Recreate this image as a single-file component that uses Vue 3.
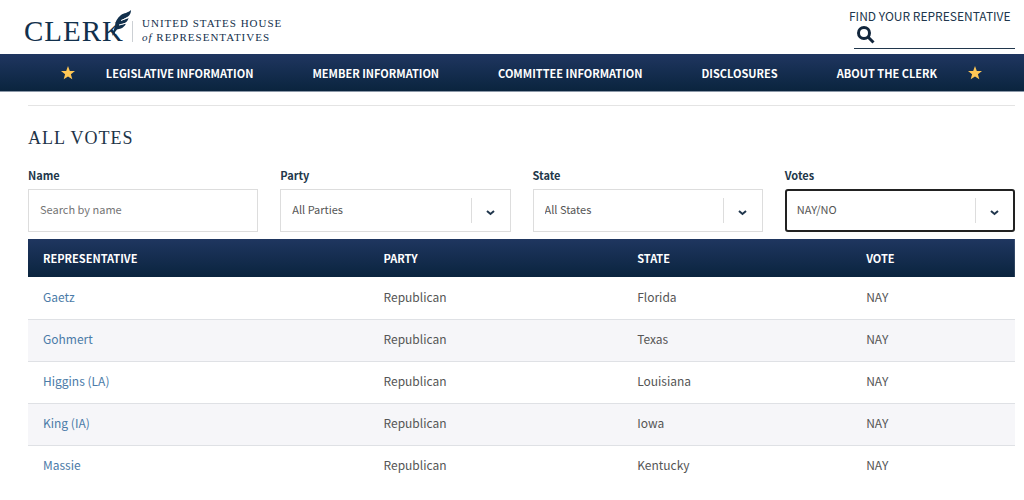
<script setup>
import { ref } from 'vue'

const links = ['Legislative Information', 'Member Information', 'Committee Information', 'Disclosures', 'About the Clerk']
const filters = [
  { id: 'party', label: 'Party', options: ['All Parties', 'Republican', 'Democratic'] },
  { id: 'state', label: 'State', options: ['All States', 'Florida', 'Iowa', 'Kentucky', 'Louisiana', 'Texas'] },
  { id: 'votes', label: 'Votes', options: ['NAY/NO', 'YEA/AYE'], active: true },
]
const chosen = ref({ party: 'All Parties', state: 'All States', votes: 'NAY/NO' })
const rows = [
  ['Gaetz', 'Florida'],
  ['Gohmert', 'Texas'],
  ['Higgins (LA)', 'Louisiana'],
  ['King (IA)', 'Iowa'],
  ['Massie', 'Kentucky'],
]
</script>

<template>
  <div class="page">
    <header class="top">
      <a class="brand" href="#" aria-label="Clerk, United States House of Representatives">
        <span class="clerk">CLERK
          <svg class="feather" viewBox="0 0 30 32" aria-hidden="true">
            <path d="M11 2H26V18L15 20L10 24Z" fill="#fff" />
            <path d="M7 26C8 22 9 19 10 16C10 12 12 8 16 5C19 3 23 3 26 0C26 3 25 5 23 6.500L16 10.500L23.500 8C23 11 21 12.500 19 13.500L14 15.500L21 13.500C20 16 18 17.500 16 18.500L12 19.500Z" fill="#12304c" />
            <path d="M16 10.500L23.500 7.500M14 15L21.500 13" fill="none" stroke="#fff" stroke-width="1" />
          </svg>
        </span>
        <span class="house"><span>UNITED STATES HOUSE</span><span><i>of</i> REPRESENTATIVES</span></span>
      </a>
      <form class="find" @submit.prevent>
        <label for="find">FIND YOUR REPRESENTATIVE</label>
        <div class="find-row">
          <svg viewBox="0 0 18 18" aria-hidden="true"><circle cx="7" cy="7" r="5.5" /><path d="M11 11L16.5 16.5" /></svg>
          <input id="find" type="text">
        </div>
      </form>
    </header>
    <nav class="bar">
      <svg class="star" viewBox="0 0 14 14" aria-hidden="true"><path d="M7 0L8.8 4.9L14 5.1L9.9 8.3L11.3 13.3L7 10.4L2.7 13.3L4.1 8.3L0 5.1L5.2 4.9Z" /></svg>
      <div class="links"><a v-for="l in links" :key="l" href="#">{{ l }}</a></div>
      <svg class="star" viewBox="0 0 14 14" aria-hidden="true"><path d="M7 0L8.8 4.9L14 5.1L9.9 8.3L11.3 13.3L7 10.4L2.7 13.3L4.1 8.3L0 5.1L5.2 4.9Z" /></svg>
    </nav>
    <main>
      <h1>ALL VOTES</h1>
      <div class="filters">
        <div class="field">
          <label for="name">Name</label>
          <div class="box"><input id="name" type="text" placeholder="Search by name"></div>
        </div>
        <div v-for="f in filters" :key="f.id" class="field">
          <label :for="f.id">{{ f.label }}</label>
          <div class="box" :class="{ active: f.active }">
            <select :id="f.id" v-model="chosen[f.id]"><option v-for="o in f.options" :key="o">{{ o }}</option></select>
            <span class="arrow"><svg viewBox="0 0 9 6" aria-hidden="true"><path d="M1 1L4.500 4L8 1" /></svg></span>
          </div>
        </div>
      </div>
      <table>
        <thead>
          <tr><th class="c1">REPRESENTATIVE</th><th class="c2">PARTY</th><th class="c3">STATE</th><th>VOTE</th></tr>
        </thead>
        <tbody>
          <tr v-for="r in rows" :key="r[0]">
            <td><a href="#">{{ r[0] }}</a></td><td>Republican</td><td>{{ r[1] }}</td><td>NAY</td>
          </tr>
        </tbody>
      </table>
    </main>
  </div>
</template>

<style>
body { background: #fff; }
</style>

<style scoped>
.page { font-family: "Noto Sans CJK SC", "Open Sans", sans-serif; font-size: 11px; line-height: 16px; color: #555; }
.page * { box-sizing: border-box; }
a { text-decoration: none; }
.top { display: flex; justify-content: space-between; height: 54px; padding: 8px 9px 0 24px; }
.brand { display: flex; align-items: flex-start; color: #12304c; font-family: "Liberation Serif", serif; }
.clerk { position: relative; width: 108px; font-size: 29px; line-height: 46px; letter-spacing: 1px; white-space: nowrap; }
.feather { position: absolute; left: 81px; top: 2px; width: 30px; height: 32px; }
.house { display: flex; flex-direction: column; margin-top: 8px; padding-left: 10px; background: linear-gradient(#ccd0d4, #ccd0d4) 0 5px / 1px 21px no-repeat; font-size: 11px; line-height: 14px; letter-spacing: 1px; white-space: nowrap; }
.find { width: 166px; color: #20364c; }
.find label { display: block; font-size: 12px; white-space: nowrap; }
.find-row { display: flex; align-items: center; margin-left: 5px; height: 25px; padding-bottom: 3px; border-bottom: 1px solid #20364c; }
.find-row svg { width: 18px; height: 18px; margin-left: 3px; fill: none; stroke: #12263c; stroke-width: 3; }
.find-row input { flex: 1; min-width: 0; border: 0; outline: 0; background: none; }
.bar { display: flex; align-items: center; justify-content: center; gap: 31px; height: 38px; padding-left: 19px; background: linear-gradient(#1f3660, #0a243e); border-bottom: 1px solid #8b98a8; }
.links { display: flex; gap: 59px; }
.links a { color: #fff; font-weight: 700; text-transform: uppercase; white-space: nowrap; }
.star { width: 14px; height: 14px; fill: #ffc755; flex: none; }
main { margin: 13px 9px 0 28px; border-top: 1px solid #e4e4e4; }
h1 { margin: 20px 0 18px; font: 400 18px/24px "Liberation Serif", serif; letter-spacing: 1px; color: #1d3448; }
.filters { display: grid; grid-template-columns: repeat(4, 1fr); gap: 22px; margin-bottom: 7px; }
.field label { display: block; margin-bottom: 7px; height: 14px; line-height: 14px; color: #22374a; font-weight: 700; }
.box { display: flex; position: relative; height: 43px; border: 1px solid #ddd; }
.box.active { border: 2px solid #222; border-radius: 3px; }
.box input, .box select { width: 100%; height: 100%; padding: 0 11px 4px; border: 0; outline: 0; background: none; appearance: none; font: inherit; color: #555; }
.box.active select { padding-left: 10px; }
.box input::placeholder { color: #757575; opacity: 1; }
.arrow { position: absolute; right: 0; top: 8px; bottom: 8px; width: 39px; border-left: 1px solid #ddd; display: flex; align-items: center; justify-content: center; pointer-events: none; }
.active .arrow { top: 7px; bottom: 7px; width: 38px; }
.arrow svg { width: 9px; height: 6px; margin-top: 4px; fill: none; stroke: #20364c; stroke-width: 2; }
table { width: 100%; border-collapse: collapse; table-layout: fixed; font-size: 12px; }
thead tr { background: linear-gradient(#1f3660, #0a243e); }
th { height: 38px; padding: 0 15px; text-align: left; color: #fff; font-size: 11px; }
.c1 { width: 34.5%; }
.c2 { width: 25.7%; }
.c3 { width: 23.2%; }
td { height: 42px; padding: 0 15px 2px; border-bottom: 1px solid #dfe1e5; }
tbody tr:nth-child(even) { background: #f6f6f9; }
tbody tr:last-child td { border-bottom: 0; }
td a { color: #4b7ba8; }
</style>
